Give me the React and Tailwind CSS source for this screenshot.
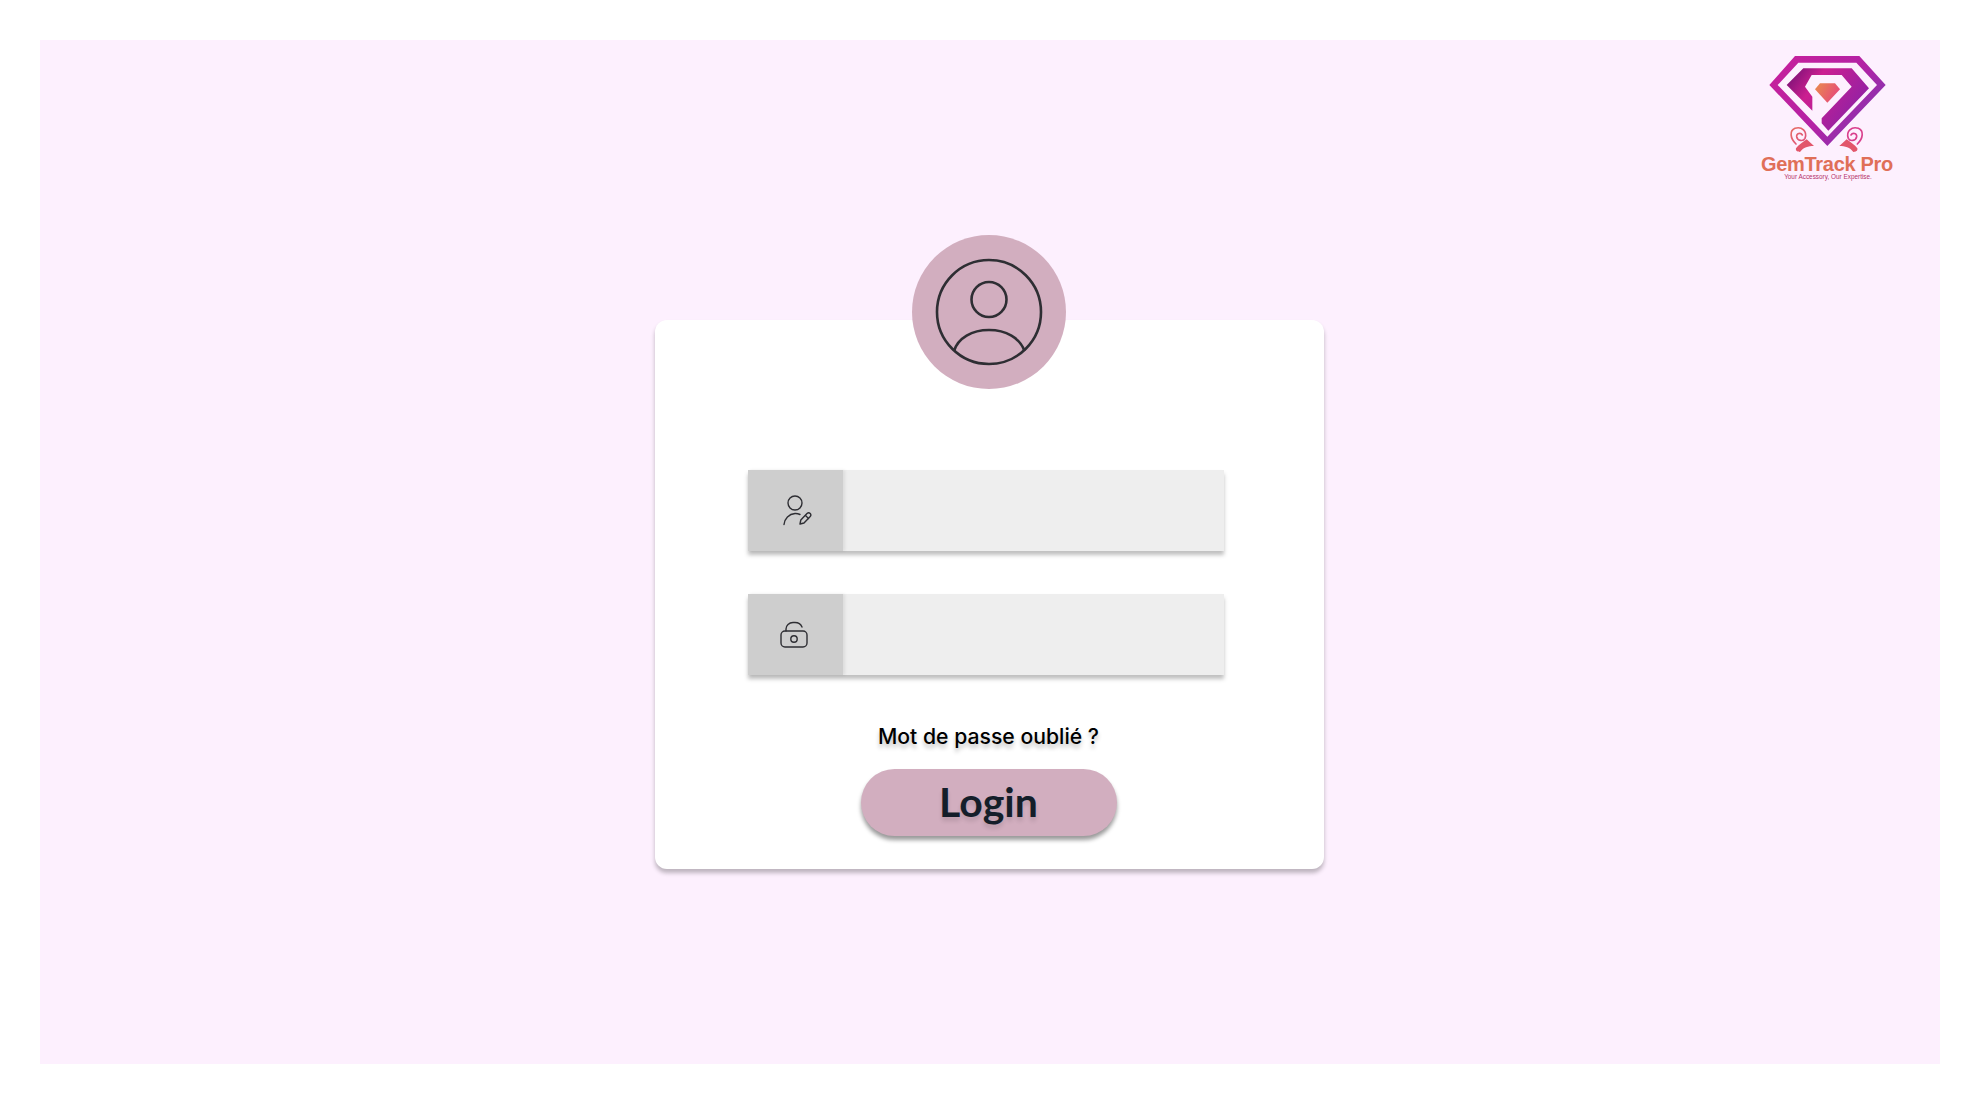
const Logo = () => (
  <div className="flex flex-col items-center w-[180px]">
    <svg width="180" height="112" viewBox="0 0 540 336" fill="none">
      <defs>
        <linearGradient id="ring" x1="90" y1="40" x2="430" y2="320" gradientUnits="userSpaceOnUse">
          <stop offset="0" stopColor="#c9209a" />
          <stop offset="0.55" stopColor="#b322a5" />
          <stop offset="1" stopColor="#6c3fb5" />
        </linearGradient>
        <linearGradient id="band" x1="140" y1="90" x2="390" y2="270" gradientUnits="userSpaceOnUse">
          <stop offset="0" stopColor="#6d0f72" />
          <stop offset="0.3" stopColor="#cc1f90" />
          <stop offset="1" stopColor="#7a22ad" />
        </linearGradient>
        <linearGradient id="gem" x1="225" y1="135" x2="300" y2="180" gradientUnits="userSpaceOnUse">
          <stop offset="0" stopColor="#e98a4f" />
          <stop offset="1" stopColor="#e6407f" />
        </linearGradient>
        <linearGradient id="curl" x1="150" y1="260" x2="220" y2="330" gradientUnits="userSpaceOnUse">
          <stop offset="0" stopColor="#e8705f" />
          <stop offset="1" stopColor="#d93f8c" />
        </linearGradient>
      </defs>
      <path
        fillRule="evenodd"
        fill="url(#ring)"
        d="M165 48H358L437 135L262 318L88 135ZM175 68L113 135L262 290L411 135L349 68Z"
      />
      <path
        fill="url(#band)"
        d="M190 85H335L387 145L265 272L245 250V235L335 140L305 105H215L195 140L217 170V212L140 135Z"
      />
      <path fill="url(#gem)" d="M225 148L240 130H285L300 148L262 188Z" />
      <g stroke="url(#curl)" strokeWidth="5" fill="none" strokeLinecap="round">
        <path d="M168 312C150 295 148 272 165 265C185 258 203 275 195 295C190 305 172 303 170 290C169 280 182 276 187 285" />
        <path d="M352 312C370 295 372 272 355 265C335 258 317 275 325 295C330 305 348 303 350 290C351 280 338 276 333 285" />
      </g>
      <path fill="#e2566b" d="M168 325C175 315 190 305 200 298L222 318C205 318 190 322 180 336C172 336 166 332 168 325Z" />
      <path fill="#e2566b" d="M352 325C345 315 330 305 320 298L298 318C315 318 330 322 340 336C348 336 354 332 352 325Z" />
    </svg>
    <span className="-mt-px -ml-[6px] font-['Liberation_Sans',sans-serif] text-[20px] font-bold leading-[26px] text-[#e06f58] tracking-[-0.3px] whitespace-nowrap">
      GemTrack Pro
    </span>
    <span className="-mt-[4px] -ml-[4px] font-['Liberation_Sans',sans-serif] text-[6.4px] leading-[8px] text-[#b5306a] whitespace-nowrap">
      Your Accessory, Our Expertise.
    </span>
  </div>
);

const AvatarIcon = () => (
  <svg width="110" height="110" viewBox="0 0 110 110" fill="none" stroke="#2e2e33" strokeWidth="2.6">
    <circle cx="55" cy="55" r="52" />
    <circle cx="55" cy="42.5" r="17.5" />
    <path d="M20 94C24 81 38 73 55 73C72 73 86 81 90.500 94" />
  </svg>
);

const UserEditIcon = () => (
  <svg width="32" height="32" viewBox="-3 0 32 32" fill="none" stroke="#2e2e33" strokeWidth="1.4" strokeLinecap="round" strokeLinejoin="round">
    <circle cx="12" cy="8" r="7" />
    <path d="M1 29.500C1.500 23.500 6 19 12 18.500C14 18.400 15.500 18.800 17 19.500" />
    <path d="M17 29L17.800 25L24 18.500C25 17.600 26.400 17.700 27.200 18.500C28 19.400 28 20.600 27.200 21.500L21 28L17 29Z" />
    <path d="M22.500 20.500L25.500 23.500" />
  </svg>
);

const LockIcon = () => (
  <svg width="32" height="32" viewBox="2 0 32 32" fill="none" stroke="#2e2e33" strokeWidth="1.4" strokeLinecap="round" strokeLinejoin="round">
    <rect x="3" y="12" width="26" height="16" rx="4" />
    <path d="M8 12V10C8 6.500 11 3.500 15 3.500H17C20.500 3.500 23 5.500 24 8" />
    <circle cx="16" cy="20" r="3.200" />
  </svg>
);

const Field = ({ icon }) => (
  <div className="flex h-[81px] w-[476px] bg-[#eeeeee] shadow-[0_4px_4px_rgba(0,0,0,0.25)]">
    <div className="flex w-[95px] items-center justify-center bg-[#cecece] shadow-[2px_0_3px_rgba(0,0,0,0.08)]">
      {icon}
    </div>
  </div>
);

const App = () => {
  return (
    <div className="h-[1104px] bg-white p-10 overflow-hidden">
      <div className="flex h-[1024px] flex-col bg-[#fdf0fe]">
        {/* Logo */}
        <div className="flex h-[280px] justify-end pr-5">
          <Logo />
        </div>

        {/* Login card */}
        <div className="ml-[615px] flex h-[549px] w-[669px] flex-col items-center rounded-[12px] bg-white pr-[2px] shadow-[0_4px_4px_rgba(0,0,0,0.25)]">
          <div className="-mt-[85px] flex h-[154px] w-[154px] shrink-0 items-center justify-center rounded-full bg-[#d2aebf]">
            <AvatarIcon />
          </div>

          <div className="mt-[81px] flex flex-col gap-[43px] self-start pl-[93px]">
            <Field icon={<UserEditIcon />} />
            <Field icon={<LockIcon />} />
          </div>

          <p className="mt-[46px] font-['Inter',sans-serif] text-[21.2px] font-medium leading-[30px] text-black [text-shadow:0_4px_4px_rgba(0,0,0,0.25)] whitespace-nowrap">
            Mot de passe oublié ?
          </p>

          <button className="mt-[18px] h-[67px] w-[256px] rounded-full bg-[#d2aebf] pb-[2px] font-['Lato',sans-serif] text-[41px] font-bold leading-none text-[#141e2a] shadow-[0_4px_4px_rgba(0,0,0,0.4)] [text-shadow:0_4px_4px_rgba(0,0,0,0.12)]">
            Login
          </button>
        </div>
      </div>
    </div>
  );
};

export default App;
